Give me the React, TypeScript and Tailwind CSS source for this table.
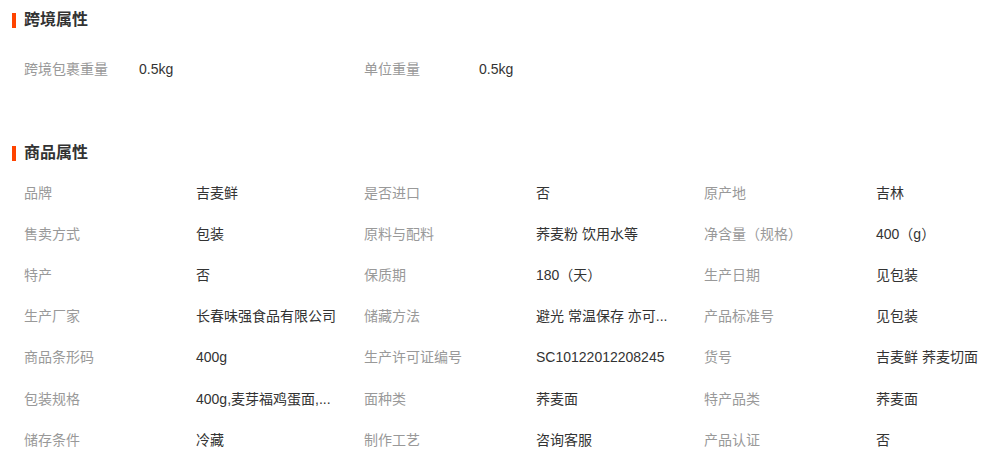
const crossBorder = [
  { label: "跨境包裹重量", value: "0.5kg" },
  { label: "单位重量", value: "0.5kg" },
]

const productAttrs = [
  { label: "品牌", value: "吉麦鲜" },
  { label: "是否进口", value: "否" },
  { label: "原产地", value: "吉林" },
  { label: "售卖方式", value: "包装" },
  { label: "原料与配料", value: "荞麦粉 饮用水等" },
  { label: "净含量（规格）", value: "400（g）" },
  { label: "特产", value: "否" },
  { label: "保质期", value: "180（天）" },
  { label: "生产日期", value: "见包装" },
  { label: "生产厂家", value: "长春味强食品有限公司" },
  { label: "储藏方法", value: "避光 常温保存 亦可..." },
  { label: "产品标准号", value: "见包装" },
  { label: "商品条形码", value: "400g" },
  { label: "生产许可证编号", value: "SC10122012208245" },
  { label: "货号", value: "吉麦鲜 荞麦切面" },
  { label: "包装规格", value: "400g,麦芽福鸡蛋面,..." },
  { label: "面种类", value: "荞麦面" },
  { label: "特产品类", value: "荞麦面" },
  { label: "储存条件", value: "冷藏" },
  { label: "制作工艺", value: "咨询客服" },
  { label: "产品认证", value: "否" },
]

function SectionTitle({ title }: { title: string }) {
  return (
    <div className="flex items-center h-5 pl-3">
      <span className="w-1 h-[15px] bg-[#ff4400] mr-2" />
      <h3 className="text-base font-bold text-[#333]">{title}</h3>
    </div>
  )
}

export default function App() {
  return (
    <div
      className="w-[985px] h-[471px] bg-white overflow-hidden pt-[10px]"
      style={{ fontFamily: '"Liberation Sans", "Noto Sans CJK SC", sans-serif' }}
    >
      <SectionTitle title="跨境属性" />
      <div className="flex pl-6 mt-[18px]">
        {crossBorder.map((item, i) => (
          <div key={i} className="w-[340px] flex items-center h-[41px] text-sm">
            <span className="w-[115px] text-[#999]">{item.label}</span>
            <span className="text-[#333]">{item.value}</span>
          </div>
        ))}
      </div>

      <div className="mt-[54px]">
        <SectionTitle title="商品属性" />
      </div>
      <div className="grid grid-cols-[340px_340px_305px] pl-6 mt-[9px]">
        {productAttrs.map((item, i) => (
          <div key={i} className="flex items-center h-[41.2px] text-sm">
            <span className="w-[172px] shrink-0 text-[#999] whitespace-nowrap">{item.label}</span>
            <span className="text-[#333] whitespace-nowrap">{item.value}</span>
          </div>
        ))}
      </div>
    </div>
  )
}
